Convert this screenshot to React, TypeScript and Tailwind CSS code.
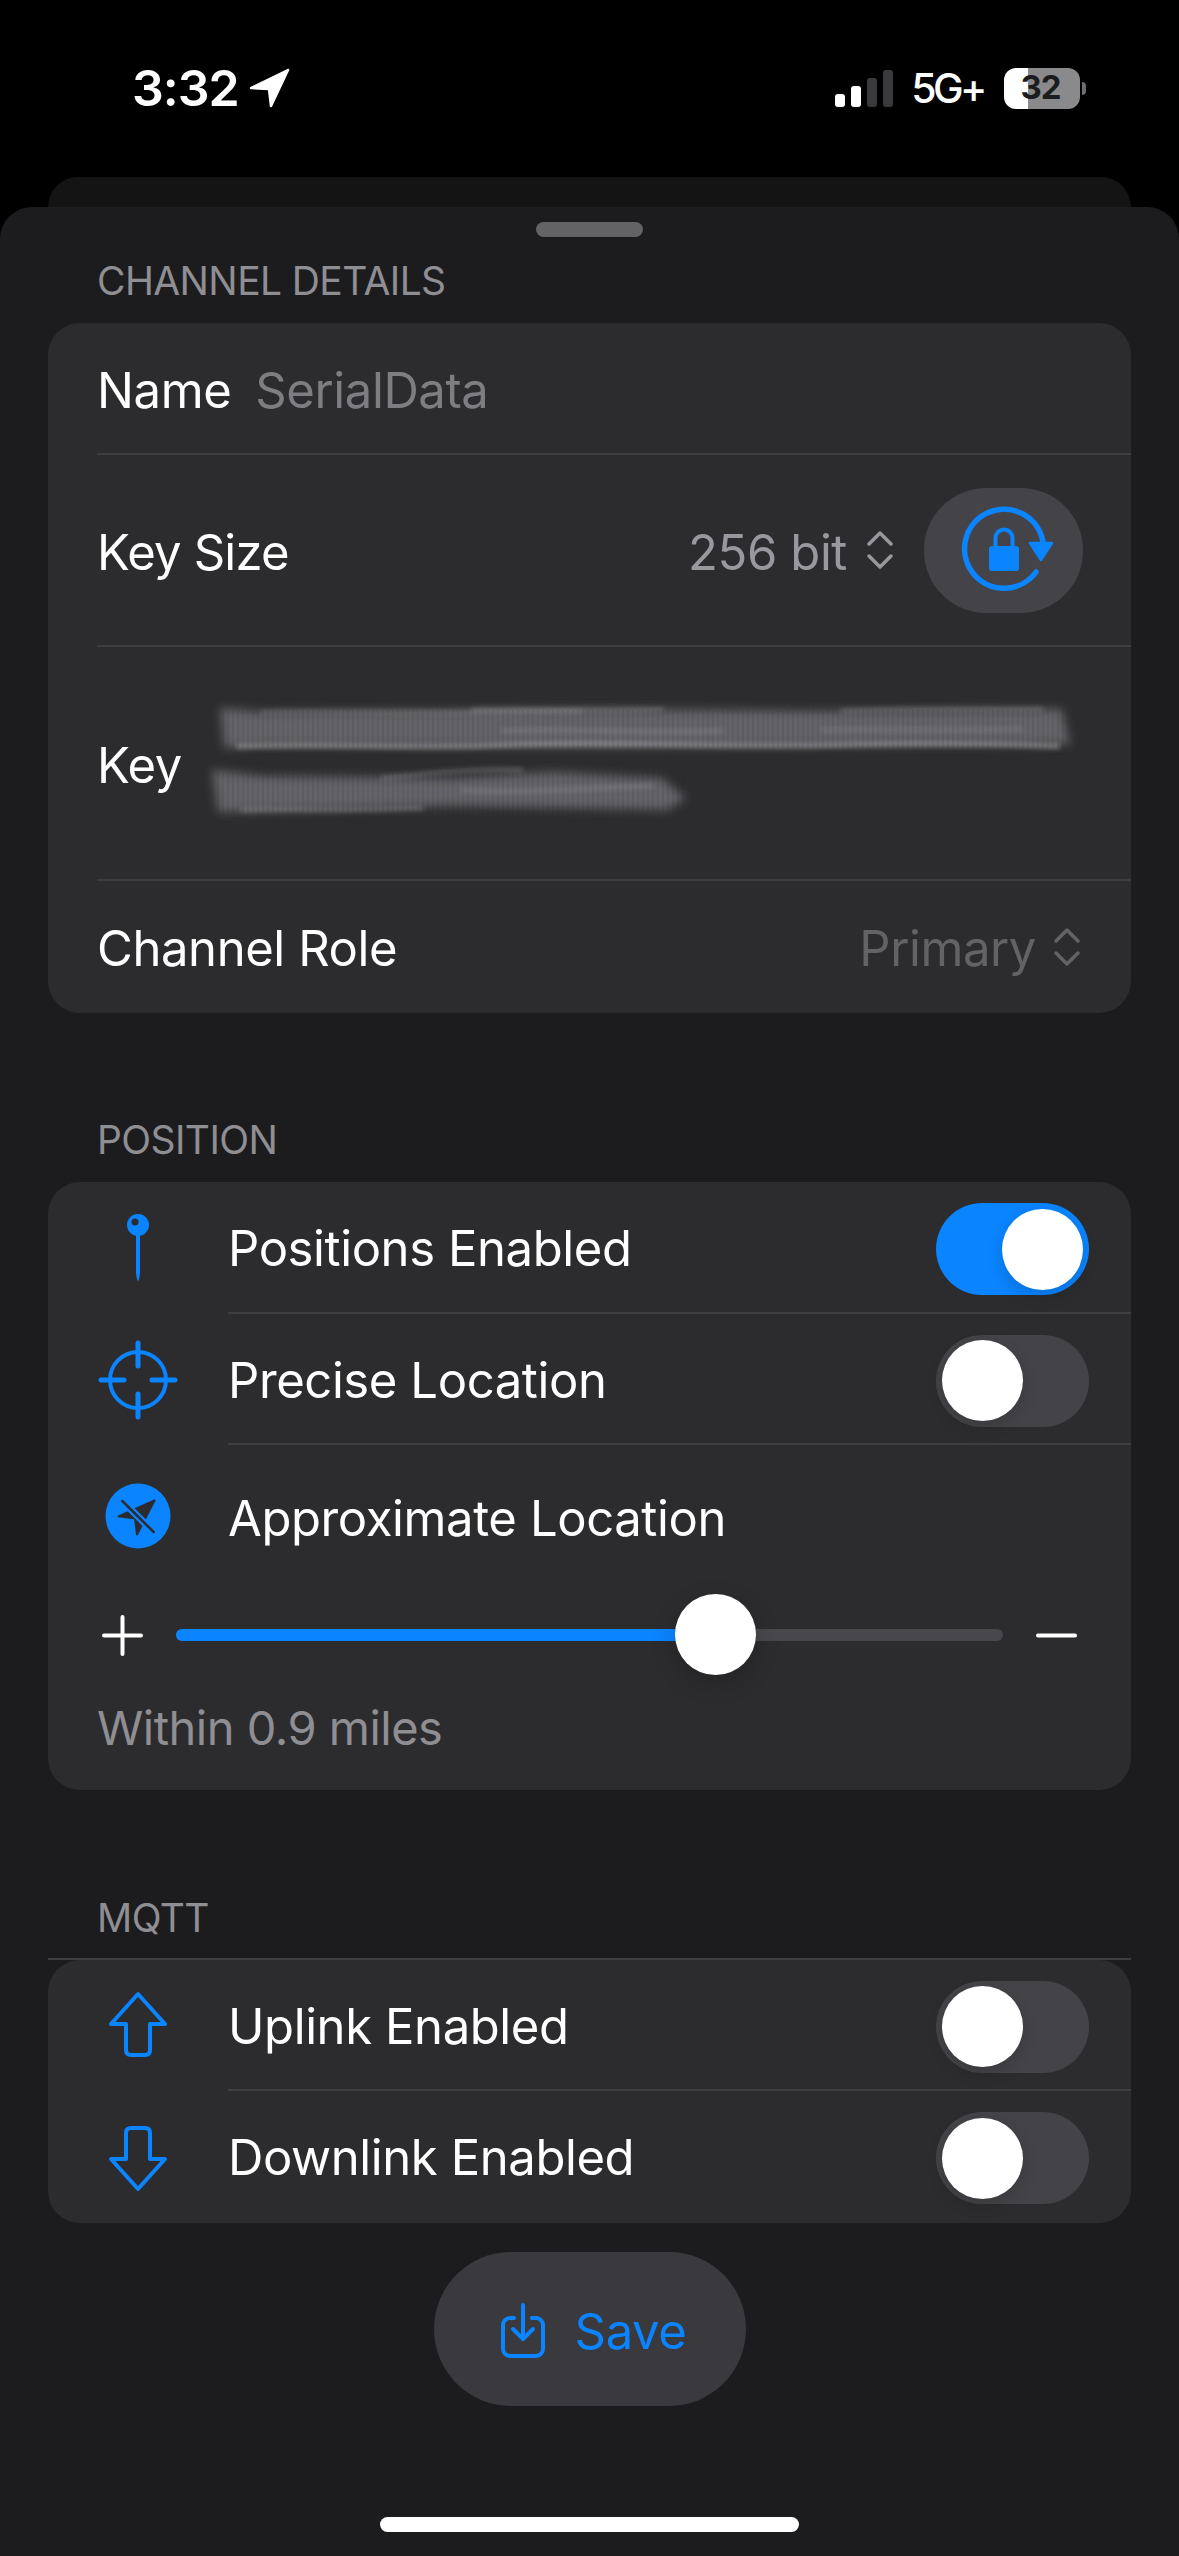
function Toggle({ on }: { on?: boolean }) {
  return (
    <div
      className={`flex h-[92px] w-[153px] items-center rounded-full p-[6px] ${
        on ? 'justify-end bg-[#0a84ff]' : 'justify-start bg-[#444448]'
      }`}
    >
      <div className="h-[81px] w-[81px] rounded-full bg-white shadow-[0_6px_16px_rgba(0,0,0,0.15)]" />
    </div>
  );
}

function Chevrons({ className }: { className: string }) {
  return (
    <svg width="28" height="40" viewBox="0 0 28 40" fill="none" stroke="currentColor" strokeWidth="3.5" strokeLinecap="round" strokeLinejoin="round" className={className}>
      <path d="M3 14 14 3l11 11" />
      <path d="M3 26l11 11 11-11" />
    </svg>
  );
}

function RotateLock() {
  return (
    <svg width="100" height="100" viewBox="0 0 100 100" fill="none">
      <path d="M82 72A39.5 39.5 0 1 1 89 42" stroke="#0a84ff" strokeWidth="5.5" strokeLinecap="round" />
      <path d="M76 43h22L87 60z" fill="#0a84ff" stroke="#0a84ff" strokeWidth="2.5" strokeLinejoin="round" />
      <rect x="35" y="46" width="30" height="25" rx="3" fill="#0a84ff" />
      <path d="M41.5 47V38a8.5 8.5 0 0 1 17 0v9" stroke="#0a84ff" strokeWidth="4" />
    </svg>
  );
}

function BlurredKey() {
  return (
    <svg width="880" height="130" viewBox="0 0 880 130" fill="none">
      <defs>
        <filter id="soft" x="-5%" y="-30%" width="110%" height="160%">
          <feGaussianBlur stdDeviation="5" />
        </filter>
        <filter id="softer" x="-5%" y="-100%" width="110%" height="300%">
          <feGaussianBlur stdDeviation="2.4" />
        </filter>
        <pattern id="hatch" width="5" height="4" patternUnits="userSpaceOnUse">
          <rect width="2" height="4" fill="#2c2c2e" opacity="0.1" />
        </pattern>
      </defs>
      <g filter="url(#soft)">
        <path d="M18 10 60 14 400 11 620 13 860 11 868 46 400 49 60 47 22 50Z" fill="#646467" />
        <path d="M10 72 60 78 250 80 350 74 460 80 484 100 466 112 250 108 60 113 16 114Z" fill="#646467" />
      </g>
      <g filter="url(#softer)" stroke="#a4a4a6" strokeLinecap="round">
        <path d="M36 48C150 45 200 51 300 47S520 49 620 47 780 45 856 48" strokeWidth="4" opacity="0.8" />
        <path d="M60 14C150 13 240 16 380 13" strokeWidth="3" opacity="0.45" />
        <path d="M300 33C360 30 440 36 520 33" strokeWidth="3" opacity="0.45" />
        <path d="M620 32C680 30 740 34 820 31" strokeWidth="3" opacity="0.4" />
        <path d="M270 12C330 10 380 14 460 11M640 13C700 10 760 12 840 11" strokeWidth="3" opacity="0.5" />
        <path d="M40 112C90 110 120 114 220 110" strokeWidth="3" opacity="0.6" />
        <path d="M260 92C320 96 380 90 450 88" strokeWidth="3" opacity="0.45" />
        <path d="M180 80C220 76 270 70 320 72" strokeWidth="3" opacity="0.5" />
      </g>
      <path d="M18 12H866V50H18ZM12 74H482V116H12Z" fill="url(#hatch)" />
    </svg>
  );
}

function SectionHeader({ title, className = '' }: { title: string; className?: string }) {
  return (
    <div className={`mb-[18px] flex h-[48px] items-center px-[97px] text-[39px] tracking-[-0.6px] text-[#8e8e93] ${className}`}>
      {title}
    </div>
  );
}

function IconRow({
  icon,
  label,
  height,
  last,
  children,
}: {
  icon: React.ReactNode;
  label: string;
  height: string;
  last?: boolean;
  children?: React.ReactNode;
}) {
  return (
    <div className={`flex ${height}`}>
      <div className="flex w-[180px] items-center justify-center">{icon}</div>
      <div className={`flex flex-1 items-center justify-between pr-[42px] ${last ? 'pt-[2px]' : 'border-b-[2px] border-[#3e3e41] pt-[4px]'}`}>
        <span className="text-[49px] tracking-[-0.4px] text-white">{label}</span>
        {children}
      </div>
    </div>
  );
}

export default function App() {
  return (
    <div className="flex h-[2556px] w-[1179px] flex-col overflow-hidden bg-black font-['Inter',sans-serif]">
      {/* Status bar */}
      <div className="flex h-[177px] shrink-0 items-start justify-between pl-[132px] pr-[93px] pt-[58px]">
        <div className="flex h-[60px] items-center gap-[10px]">
          <span className="text-[50px] font-semibold leading-none tracking-[-1px] text-white">3:32</span>
          <svg width="42" height="40" viewBox="0 0 42 40" fill="#fff" stroke="#fff" strokeWidth="2.5" strokeLinejoin="round">
            <path d="M39 2 2 20l18 1 2 17z" />
          </svg>
        </div>
        <div className="flex h-[60px] items-center">
          <div className="flex h-[37px] items-end gap-[6px]">
            <div className="h-[13px] w-[10px] rounded-[3px] bg-white" />
            <div className="h-[21px] w-[10px] rounded-[3px] bg-white" />
            <div className="h-[29px] w-[10px] rounded-[3px] bg-[#3a3a3c]" />
            <div className="h-[37px] w-[10px] rounded-[3px] bg-[#3a3a3c]" />
          </div>
          <span className="ml-[18px] text-[41px] font-medium leading-none tracking-[-3.5px] text-white">5G+</span>
          <div className="ml-[20px] flex h-[41px] w-[76px] items-center justify-center overflow-hidden rounded-[12px] bg-[linear-gradient(90deg,#fff_31%,#8a8a8c_31%)] pr-[3px] text-[33px] font-bold tracking-[-1px] text-[#1c1c1e]">
            32
          </div>
          <div className="ml-[2px] h-[13px] w-[4px] rounded-r-full bg-[#6d6d70]" />
        </div>
      </div>

      {/* Sheet behind */}
      <div className="mx-[48px] h-[30px] shrink-0 rounded-t-[30px] bg-[#141415]" />

      {/* Sheet */}
      <div className="flex flex-1 flex-col rounded-t-[32px] bg-[#1c1c1e] pt-[15px]">
        <div className="mx-auto h-[15px] w-[107px] rounded-full bg-[#636366]" />

        <div className="mt-[20px]">
          <SectionHeader title="CHANNEL DETAILS" />
        </div>

        <div className="mx-[48px] rounded-[32px] bg-[#2c2c2e] text-[49px] tracking-[-0.4px]">
          <div className="ml-[49px] flex h-[132px] items-center gap-[24px] border-b-[2px] border-[#3e3e41]">
            <span className="pt-[5px] text-white">Name</span>
            <span className="pt-[5px] text-[#7d7d82]">SerialData</span>
          </div>
          <div className="ml-[49px] flex h-[192px] items-center justify-between border-b-[2px] border-[#3e3e41] pr-[48px]">
            <span className="pt-[5px] tracking-[-0.8px] text-white">Key Size</span>
            <div className="flex items-center">
              <span className="pt-[5px] text-[#98989e]">256 bit</span>
              <Chevrons className="ml-[19px] text-[#98989e]" />
              <div className="ml-[30px] flex h-[125px] w-[159px] items-center justify-center rounded-[62px] bg-[#444448]">
                <RotateLock />
              </div>
            </div>
          </div>
          <div className="ml-[49px] flex h-[234px] items-center gap-[20px] border-b-[2px] border-[#3e3e41]">
            <span className="pt-[5px] text-white">Key</span>
            <BlurredKey />
          </div>
          <div className="ml-[49px] flex h-[132px] items-center justify-between pr-[50px]">
            <span className="pt-[3px] text-white">Channel Role</span>
            <div className="flex items-center gap-[17px] text-[#636366]">
              <span className="pt-[3px]">Primary</span>
              <Chevrons className="text-[#636366]" />
            </div>
          </div>
        </div>

        <SectionHeader title="POSITION" className="mt-[103px]" />

        <div className="mx-[48px] rounded-[32px] bg-[#2c2c2e]">
          <IconRow
            height="h-[132px]"
            label="Positions Enabled"
            icon={
              <svg width="30" height="70" viewBox="0 0 30 70" fill="#0a84ff">
                <circle cx="15" cy="12" r="11" />
                <path d="M13 20v40q1 8 2 8t2-8V20z" />
                <circle cx="12" cy="9" r="3.5" fill="#2c2c2e" />
              </svg>
            }
          >
            <Toggle on />
          </IconRow>
          <IconRow
            height="h-[131px]"
            label="Precise Location"
            icon={
              <svg width="80" height="80" viewBox="0 0 80 80" fill="none" stroke="#0a84ff" strokeLinecap="round">
                <circle cx="40" cy="40" r="28" strokeWidth="4" />
                <path d="M40 3v23M40 54v23M3 40h23M54 40h23" strokeWidth="5" />
              </svg>
            }
          >
            <Toggle />
          </IconRow>
          <IconRow
            height="h-[145px]"
            last
            label="Approximate Location"
            icon={
              <svg width="70" height="70" viewBox="0 0 70 70" className="mb-[4px]">
                <circle cx="35" cy="35" r="32.5" fill="#0a84ff" />
                <path d="M51.5 19.5 15.5 35.3l16.5 2.2 2 16z" fill="#2c2c2e" stroke="#2c2c2e" strokeWidth="2" strokeLinejoin="round" />
                <path d="M19.3 20 50.7 51" stroke="#0a84ff" strokeWidth="7" />
                <path d="M19.3 20 50.7 51" stroke="#2c2c2e" strokeWidth="2.5" strokeLinecap="round" />
              </svg>
            }
          />

          {/* Slider */}
          <div className="flex h-[90px] items-center gap-[33px] px-[54px]">
            <svg width="41" height="41" viewBox="0 0 41 41" stroke="#fff" strokeWidth="4" strokeLinecap="round" className="shrink-0">
              <path d="M20.5 2v37M2 20.5h37" />
            </svg>
            <div className="relative h-[12px] flex-1 rounded-full bg-[#48484c]">
              <div className="h-full w-[65%] rounded-full bg-[#0a84ff]" />
              <div className="absolute left-[499px] top-[-35px] h-[81px] w-[81px] rounded-full bg-white shadow-[0_8px_24px_rgba(0,0,0,0.18)]" />
            </div>
            <svg width="41" height="41" viewBox="0 0 41 41" stroke="#fff" strokeWidth="4" strokeLinecap="round" className="shrink-0">
              <path d="M2 20.5h37" />
            </svg>
          </div>

          <div className="flex h-[110px] items-start px-[49px] pt-[20px] text-[47px] leading-[56px] tracking-[-0.5px] text-[#8e8e93]">
            Within 0.9 miles
          </div>
        </div>

        <SectionHeader title="MQTT" className="mt-[104px]" />

        <div className="mx-[48px] -mt-[2px] border-t-[2px] border-[#3e3e41]">
          <div className="rounded-[32px] bg-[#2c2c2e]">
            <IconRow
              height="h-[131px]"
              label="Uplink Enabled"
              icon={
                <svg width="62" height="70" viewBox="0 0 62 70" fill="none" stroke="#0a84ff" strokeWidth="4" strokeLinejoin="round">
                  <path d="M31 3 58 33H43v26q0 5-5 5H24q-5 0-5-5V33H4z" />
                </svg>
              }
            >
              <Toggle />
            </IconRow>
            <IconRow
              height="h-[132px]"
              last
              label="Downlink Enabled"
              icon={
                <svg width="62" height="70" viewBox="0 0 62 70" fill="none" stroke="#0a84ff" strokeWidth="4" strokeLinejoin="round">
                  <path d="M31 67 58 37H43V11q0-5-5-5H24q-5 0-5 5v26H4z" />
                </svg>
              }
            >
              <Toggle />
            </IconRow>
          </div>
        </div>

        {/* Save */}
        <div className="mt-[29px] flex justify-center">
          <div className="flex h-[154px] w-[312px] items-center justify-center gap-[28px] rounded-[77px] bg-[#3a3a3e] pl-[6px] text-[#0a84ff]">
            <svg width="48" height="57" viewBox="0 0 48 57" fill="none" stroke="#0a84ff" strokeWidth="4" strokeLinecap="round" strokeLinejoin="round">
              <path d="M15 17h-4a7 7 0 0 0-7 7v24a7 7 0 0 0 7 7h26a7 7 0 0 0 7-7V24a7 7 0 0 0-7-7h-4" />
              <path d="M24 4v34M14 28l10 10 10-10" />
            </svg>
            <span className="pt-[5px] text-[49px] tracking-[-0.4px]">Save</span>
          </div>
        </div>

        {/* Home indicator */}
        <div className="mx-auto mt-[111px] h-[15px] w-[419px] rounded-full bg-white" />
      </div>
    </div>
  );
}
